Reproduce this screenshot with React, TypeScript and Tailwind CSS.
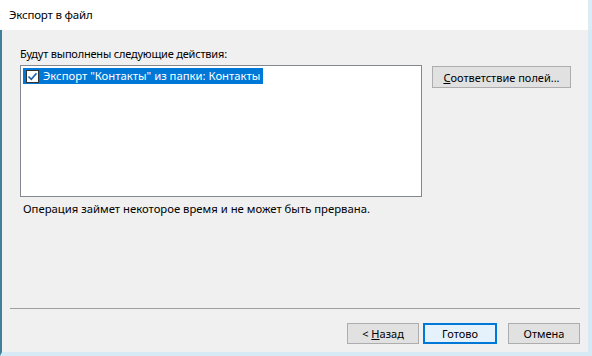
export default function App() {
  return (
    <div
      className="w-[592px] h-[356px] flex flex-col bg-[#f0f0f0] text-[11px] text-black overflow-hidden"
      style={{ fontFamily: '"Segoe UI", "Noto Sans", "Open Sans", sans-serif' }}
    >
      {/* title bar */}
      <div className="h-[30px] bg-white flex items-center pl-[9px] pr-[4px] border-r-[4px] border-[#dcecf7] text-[11.5px] tracking-[-0.2px]">
        Экспорт в файл
      </div>

      <div className="flex-1 flex flex-col border-l-2 border-l-[#3f7f9a] border-r-[4px] border-r-[#d6eaf6] border-b-[4px] border-b-[#d6eaf6]">
        <div className="pl-[18px] pt-[16px] leading-[16px] tracking-[-0.2px]">Будут выполнены следующие действия:</div>

        <div className="flex pl-[18px] pt-[3px]">
          <div className="w-[402px] h-[132px] bg-white border border-[#828790] pl-[2px] pt-[2px]">
            <div className="inline-flex items-center h-[16px] pr-[3px] bg-[#0078d7] text-white whitespace-nowrap">
              <span className="ml-[3px] w-[13px] h-[13px] bg-white border border-[#333] flex items-center justify-center">
                <svg width="11" height="11" viewBox="0 0 11 11">
                  <path d="M1.5 5.5 L4.3 8.3 L9.5 2.2" fill="none" stroke="#1a5fb4" strokeWidth="1.6" />
                </svg>
              </span>
              <span className="ml-[4px] leading-[16px] text-[11.3px]">Экспорт "Контакты" из папки: Контакты</span>
            </div>
          </div>
          <button className="ml-[10px] mt-[1px] w-[139px] h-[22px] bg-[#e1e1e1] border border-[#adadad] flex items-center justify-center leading-none">
            <span>
              <span className="underline">С</span>оответствие полей...
            </span>
          </button>
        </div>

        <div className="pl-[21px] pt-[4px] leading-[16px] text-[11.3px]">Операция займет некоторое время и не может быть прервана.</div>

        <div className="flex-1" />

        <div className="mx-[8px] h-px bg-[#a0a0a0]" />

        <div className="flex justify-end pt-[14px] pb-[8px] pr-[8px]">
          <button className="w-[72px] h-[21px] bg-[#e1e1e1] border border-[#adadad] leading-none">
            &lt; <span className="underline">Н</span>азад
          </button>
          <button className="ml-[4px] w-[74px] h-[21px] bg-[#e5f1fb] border-2 border-[#0078d7] leading-none">
            Готово
          </button>
          <button className="ml-[11px] w-[72px] h-[21px] bg-[#e1e1e1] border border-[#adadad] leading-none">
            Отмена
          </button>
        </div>
      </div>
    </div>
  );
}
